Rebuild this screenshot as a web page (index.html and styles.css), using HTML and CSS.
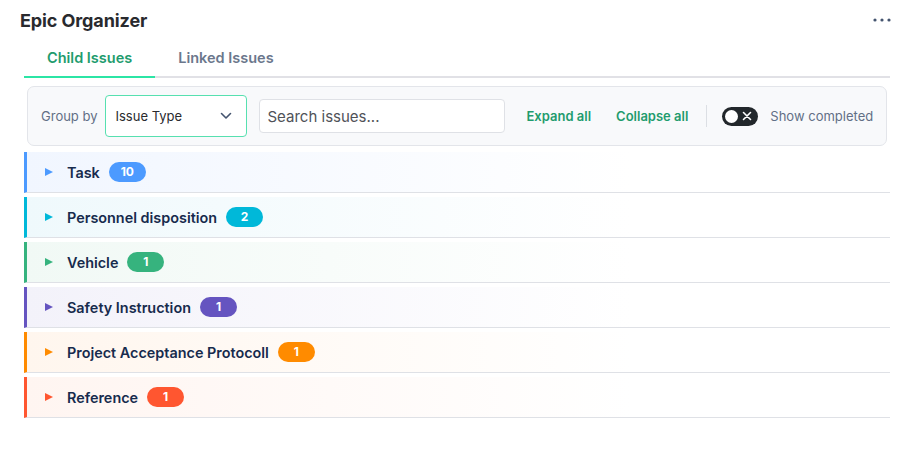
FILE: index.html
```html
<!DOCTYPE html>
<html lang="en">
<head>
  <meta charset="UTF-8">
  <meta name="viewport" content="width=device-width, initial-scale=1.0">
  <title>Epic Organizer</title>
  <link rel="stylesheet" href="styles.css">
</head>
<body>
  <div class="panel">
    <div class="header">
      <h1 class="title">Epic Organizer</h1>
      <button class="more" aria-label="More">
        <svg width="18" height="4" viewBox="0 0 18 4"><circle cx="2" cy="2" r="1.6"/><circle cx="9" cy="2" r="1.6"/><circle cx="16" cy="2" r="1.6"/></svg>
      </button>
    </div>

    <div class="tabs">
      <div class="tab active">Child Issues</div>
      <div class="tab">Linked Issues</div>
    </div>

    <div class="toolbar">
      <span class="label">Group by</span>
      <div class="select">
        <span>Issue Type</span>
        <svg width="12" height="8" viewBox="0 0 12 8"><path d="M1.5 1.5 L6 6 L10.5 1.5" fill="none" stroke="#44546f" stroke-width="1.6" stroke-linecap="round" stroke-linejoin="round"/></svg>
      </div>
      <input class="search" type="text" placeholder="Search issues...">
      <a class="link expand">Expand all</a>
      <a class="link collapse">Collapse all</a>
      <span class="divider"></span>
      <span class="toggle">
        <span class="knob"></span>
        <svg width="10" height="10" viewBox="0 0 10 10"><path d="M1.5 1.5 L8.5 8.5 M8.5 1.5 L1.5 8.5" stroke="#fff" stroke-width="1.6" stroke-linecap="round"/></svg>
      </span>
      <span class="label">Show completed</span>
    </div>

    <div class="groups">
      <div class="group blue">
        <span class="caret"></span>
        <span class="name">Task</span>
        <span class="badge">10</span>
      </div>
      <div class="group cyan">
        <span class="caret"></span>
        <span class="name">Personnel disposition</span>
        <span class="badge">2</span>
      </div>
      <div class="group green">
        <span class="caret"></span>
        <span class="name">Vehicle</span>
        <span class="badge">1</span>
      </div>
      <div class="group purple">
        <span class="caret"></span>
        <span class="name">Safety Instruction</span>
        <span class="badge">1</span>
      </div>
      <div class="group orange">
        <span class="caret"></span>
        <span class="name">Project Acceptance Protocoll</span>
        <span class="badge">1</span>
      </div>
      <div class="group red">
        <span class="caret"></span>
        <span class="name">Reference</span>
        <span class="badge">1</span>
      </div>
    </div>
  </div>
</body>
</html>
```

FILE: styles.css
```css
body, html {
  margin: 0;
  padding: 0;
  background: #fff;
  font-family: Inter, "Noto Sans", sans-serif;
  color: #172b4d;
}
.panel {
  padding: 0 17px 0 24px;
}
.header {
  display: flex;
  justify-content: space-between;
  align-items: center;
  height: 38px;
  padding-top: 1px;
  margin-left: -4px;
}
.title {
  margin: 0;
  font-size: 18px;
  font-weight: 700;
  color: #292a2e;
  letter-spacing: -0.1px;
}
.more {
  border: 0;
  background: none;
  padding: 0;
  margin-right: -1px;
  fill: #44546f;
  display: flex;
}
.tabs {
  display: flex;
  border-bottom: 2px solid #e1e1e6;
}
.tab {
  padding: 10px 23px 9px;
  line-height: 18px;
  font-size: 14.5px;
  font-weight: 600;
  color: #6b778c;
  margin-bottom: -2px;
  border-bottom: 2px solid transparent;
}
.tab.active {
  color: #1f9c6e;
  border-bottom-color: #2be5a5;
}
.toolbar {
  display: flex;
  align-items: center;
  margin: 8px 3px 0;
  padding: 8px 13px;
  background: #f8f9fb;
  border: 1px solid #e3e5ea;
  border-radius: 7px;
  white-space: nowrap;
}
.toolbar > * {
  flex-shrink: 0;
}
.label {
  font-size: 13px;
  color: #626f86;
}
.select {
  width: 142px;
  height: 42px;
  box-sizing: border-box;
  margin-left: 7px;
  padding: 0 14px 0 10px;
  display: flex;
  align-items: center;
  justify-content: space-between;
  background: #fff;
  border: 1px solid #57e0b0;
  border-radius: 4px;
  font-size: 13px;
  color: #292a2e;
}
.search {
  width: 246px;
  height: 34px;
  box-sizing: border-box;
  margin-left: 12px;
  padding: 0 8px;
  border: 1px solid #dfe1e6;
  border-radius: 4px;
  font-family: inherit;
  font-size: 15px;
  color: #292a2e;
  background: #fff;
}
.search::placeholder {
  color: #505258;
}
.link {
  font-size: 13px;
  font-weight: 600;
  color: #1f9c6e;
}
.expand {
  margin-left: 22px;
}
.collapse {
  margin-left: 25px;
}
.divider {
  width: 1px;
  height: 22px;
  background: #dcdfe4;
  margin-left: 18px;
}
.toggle {
  margin-left: 15px;
  width: 36px;
  height: 19px;
  box-sizing: border-box;
  border-radius: 10px;
  background: #22272b;
  display: flex;
  align-items: center;
  justify-content: space-between;
  padding: 0 6px 0 3px;
}
.knob {
  width: 13px;
  height: 13px;
  border-radius: 50%;
  background: #fff;
}
.toggle + .label {
  margin-left: 12px;
}
.groups {
  margin-top: 6px;
}
.group {
  display: flex;
  align-items: center;
  height: 40px;
  margin-bottom: 4px;
  border-left: 3px solid var(--c);
  border-bottom: 1px solid #dfe1e6;
  padding-left: 18px;
  background: linear-gradient(90deg, var(--bg), rgba(255, 255, 255, 0) 70%);
}
.blue   { --c: #4c9aff; --bg: #f1f6ff; }
.cyan   { --c: #00b8d9; --bg: #eff9fc; }
.green  { --c: #36b37e; --bg: #f1f9f5; }
.purple { --c: #6554c0; --bg: #f3f2fa; }
.orange { --c: #ff8b00; --bg: #fff6ee; }
.red    { --c: #ff5630; --bg: #fff5f1; }
.caret {
  width: 0;
  height: 0;
  border-top: 4.5px solid transparent;
  border-bottom: 4.5px solid transparent;
  border-left: 8px solid var(--c);
  margin-right: 14px;
}
.name {
  font-size: 14.4px;
  font-weight: 600;
  color: #172b4d;
}
.badge {
  margin-left: 9px;
  min-width: 37px;
  box-sizing: border-box;
  height: 20px;
  line-height: 20px;
  padding: 0 10px;
  text-align: center;
  border-radius: 10px;
  background: var(--c);
  color: #fff;
  font-size: 12px;
  font-weight: 700;
}
```
